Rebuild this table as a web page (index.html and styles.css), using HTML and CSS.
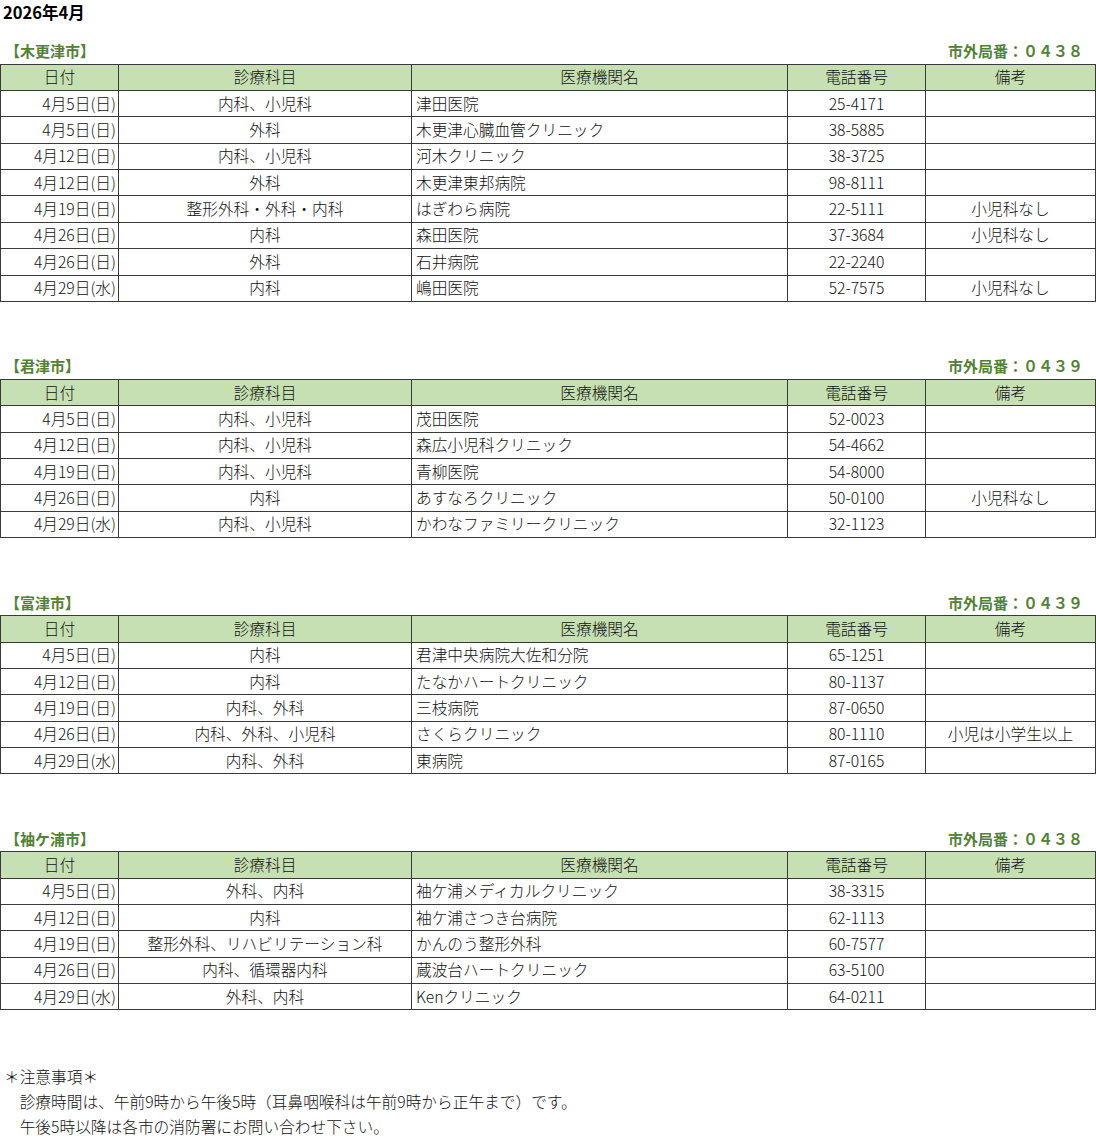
FILE: index.html
```html
<!DOCTYPE html>
<html lang="ja">
<head>
<meta charset="utf-8">
<title>2026年4月 休日当番医</title>
<link rel="stylesheet" href="styles.css">
</head>
<body>
<div class="page">
  <div class="title">2026年4月</div>

  <section class="sect first">
    <div class="label-row"><span class="city">【木更津市】</span><span class="code">市外局番：０４３８</span></div>
    <table class="sched">
      <colgroup><col class="c1"><col class="c2"><col class="c3"><col class="c4"><col class="c5"></colgroup>
      <thead><tr><th>日付</th><th>診療科目</th><th>医療機関名</th><th>電話番号</th><th>備考</th></tr></thead>
      <tbody>
        <tr><td class="d">4月5日(日)</td><td class="m">内科、小児科</td><td class="n">津田医院</td><td class="t">25-4171</td><td class="r"></td></tr>
        <tr><td class="d">4月5日(日)</td><td class="m">外科</td><td class="n">木更津心臓血管クリニック</td><td class="t">38-5885</td><td class="r"></td></tr>
        <tr><td class="d">4月12日(日)</td><td class="m">内科、小児科</td><td class="n">河木クリニック</td><td class="t">38-3725</td><td class="r"></td></tr>
        <tr><td class="d">4月12日(日)</td><td class="m">外科</td><td class="n">木更津東邦病院</td><td class="t">98-8111</td><td class="r"></td></tr>
        <tr><td class="d">4月19日(日)</td><td class="m">整形外科・外科・内科</td><td class="n">はぎわら病院</td><td class="t">22-5111</td><td class="r">小児科なし</td></tr>
        <tr><td class="d">4月26日(日)</td><td class="m">内科</td><td class="n">森田医院</td><td class="t">37-3684</td><td class="r">小児科なし</td></tr>
        <tr><td class="d">4月26日(日)</td><td class="m">外科</td><td class="n">石井病院</td><td class="t">22-2240</td><td class="r"></td></tr>
        <tr><td class="d">4月29日(水)</td><td class="m">内科</td><td class="n">嶋田医院</td><td class="t">52-7575</td><td class="r">小児科なし</td></tr>
      </tbody>
    </table>
  </section>

  <section class="sect">
    <div class="label-row"><span class="city">【君津市】</span><span class="code">市外局番：０４３９</span></div>
    <table class="sched">
      <colgroup><col class="c1"><col class="c2"><col class="c3"><col class="c4"><col class="c5"></colgroup>
      <thead><tr><th>日付</th><th>診療科目</th><th>医療機関名</th><th>電話番号</th><th>備考</th></tr></thead>
      <tbody>
        <tr><td class="d">4月5日(日)</td><td class="m">内科、小児科</td><td class="n">茂田医院</td><td class="t">52-0023</td><td class="r"></td></tr>
        <tr><td class="d">4月12日(日)</td><td class="m">内科、小児科</td><td class="n">森広小児科クリニック</td><td class="t">54-4662</td><td class="r"></td></tr>
        <tr><td class="d">4月19日(日)</td><td class="m">内科、小児科</td><td class="n">青柳医院</td><td class="t">54-8000</td><td class="r"></td></tr>
        <tr><td class="d">4月26日(日)</td><td class="m">内科</td><td class="n">あすなろクリニック</td><td class="t">50-0100</td><td class="r">小児科なし</td></tr>
        <tr><td class="d">4月29日(水)</td><td class="m">内科、小児科</td><td class="n">かわなファミリークリニック</td><td class="t">32-1123</td><td class="r"></td></tr>
      </tbody>
    </table>
  </section>

  <section class="sect">
    <div class="label-row"><span class="city">【富津市】</span><span class="code">市外局番：０４３９</span></div>
    <table class="sched">
      <colgroup><col class="c1"><col class="c2"><col class="c3"><col class="c4"><col class="c5"></colgroup>
      <thead><tr><th>日付</th><th>診療科目</th><th>医療機関名</th><th>電話番号</th><th>備考</th></tr></thead>
      <tbody>
        <tr><td class="d">4月5日(日)</td><td class="m">内科</td><td class="n">君津中央病院大佐和分院</td><td class="t">65-1251</td><td class="r"></td></tr>
        <tr><td class="d">4月12日(日)</td><td class="m">内科</td><td class="n">たなかハートクリニック</td><td class="t">80-1137</td><td class="r"></td></tr>
        <tr><td class="d">4月19日(日)</td><td class="m">内科、外科</td><td class="n">三枝病院</td><td class="t">87-0650</td><td class="r"></td></tr>
        <tr><td class="d">4月26日(日)</td><td class="m">内科、外科、小児科</td><td class="n">さくらクリニック</td><td class="t">80-1110</td><td class="r">小児は小学生以上</td></tr>
        <tr><td class="d">4月29日(水)</td><td class="m">内科、外科</td><td class="n">東病院</td><td class="t">87-0165</td><td class="r"></td></tr>
      </tbody>
    </table>
  </section>

  <section class="sect">
    <div class="label-row"><span class="city">【袖ケ浦市】</span><span class="code">市外局番：０４３８</span></div>
    <table class="sched">
      <colgroup><col class="c1"><col class="c2"><col class="c3"><col class="c4"><col class="c5"></colgroup>
      <thead><tr><th>日付</th><th>診療科目</th><th>医療機関名</th><th>電話番号</th><th>備考</th></tr></thead>
      <tbody>
        <tr><td class="d">4月5日(日)</td><td class="m">外科、内科</td><td class="n">袖ケ浦メディカルクリニック</td><td class="t">38-3315</td><td class="r"></td></tr>
        <tr><td class="d">4月12日(日)</td><td class="m">内科</td><td class="n">袖ケ浦さつき台病院</td><td class="t">62-1113</td><td class="r"></td></tr>
        <tr><td class="d">4月19日(日)</td><td class="m">整形外科、リハビリテーション科</td><td class="n">かんのう整形外科</td><td class="t">60-7577</td><td class="r"></td></tr>
        <tr><td class="d">4月26日(日)</td><td class="m">内科、循環器内科</td><td class="n">蔵波台ハートクリニック</td><td class="t">63-5100</td><td class="r"></td></tr>
        <tr><td class="d">4月29日(水)</td><td class="m">外科、内科</td><td class="n">Kenクリニック</td><td class="t">64-0211</td><td class="r"></td></tr>
      </tbody>
    </table>
  </section>

  <div class="notes">
    <p>＊注意事項＊</p>
    <p>　診療時間は、午前9時から午後5時（耳鼻咽喉科は午前9時から正午まで）です。</p>
    <p>　午後5時以降は各市の消防署にお問い合わせ下さい。</p>
  </div>
</div>
</body>
</html>
```

FILE: styles.css
```css
html, body {
  margin: 0;
  padding: 0;
  background: #ffffff;
}

body {
  font-family: "Noto Sans CJK JP", "Noto Sans", sans-serif;
  font-size: 15.7px;
  font-weight: 300;
  color: #111111;
}

.page {
  width: 1096px;
}

.title {
  height: 37.5px;
  line-height: 24px;
  font-size: 16.5px;
  font-weight: 700;
  padding-left: 3px;
  box-sizing: border-box;
  color: #000;
}

.sect {
  margin-top: 50.9px;
}

.sect.first {
  margin-top: 0;
}

.label-row {
  height: 26.25px;
  display: flex;
  align-items: center;
  justify-content: space-between;
  color: #548235;
  font-weight: 700;
  font-size: 15px;
}

.city {
  padding-left: 5px;
}

.code {
  padding-right: 13px;
}

.sched {
  border-collapse: collapse;
  table-layout: fixed;
  width: 1095px;
}

.c1 { width: 118px; }
.c2 { width: 293px; }
.c3 { width: 376px; }
.c4 { width: 138px; }
.c5 { width: 170px; }

.sched th,
.sched td {
  border: 1px solid #3a3a3a;
  height: 25.35px;
  padding: 0;
  white-space: nowrap;
  overflow: hidden;
  line-height: 20px;
  font-weight: 300;
  vertical-align: middle;
}

.sched th {
  background: #c6e0b4;
  text-align: center;
}

.sched td.d {
  text-align: right;
  padding-right: 2px;
}

.sched td.m,
.sched td.t,
.sched td.r {
  text-align: center;
}

.sched td.n {
  text-align: left;
  padding-left: 4px;
}

.notes {
  margin-top: 53.5px;
  padding-left: 4px;
}

.notes p {
  margin: 0;
  height: 25.2px;
  line-height: 25.2px;
}
```
